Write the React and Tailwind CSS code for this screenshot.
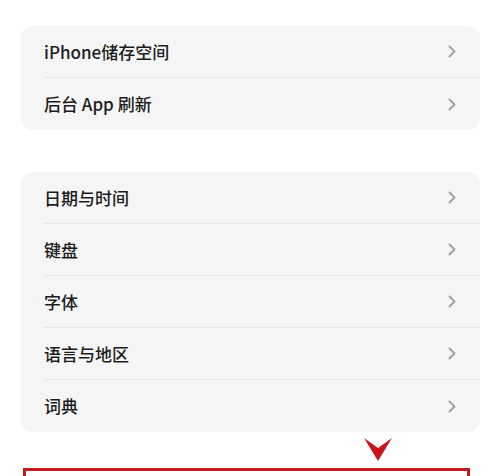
const groups = [
  ['iPhone储存空间', '后台 App 刷新'],
  ['日期与时间', '键盘', '字体', '语言与地区', '词典'],
];

function Chevron() {
  return (
    <svg width="8" height="13" viewBox="0 0 8 13" className="shrink-0">
      <path d="M1.5 1.5 L6.5 6.5 L1.5 11.5" fill="none" stroke="#a3a3a3" strokeWidth="2" strokeLinecap="round" strokeLinejoin="round" />
    </svg>
  );
}

function Row({ label, last }) {
  return (
    <div className="pl-[23px]">
      <div className={`flex h-[52px] items-center justify-between pr-[24px] ${last ? '' : 'border-b border-[#e6e6e6]'}`}>
        <span className="text-[17px] font-medium text-[#1c1c1c]">{label}</span>
        <Chevron />
      </div>
    </div>
  );
}

export default function App() {
  return (
    <div
      className="h-[476px] w-[500px] overflow-hidden bg-white"
      style={{ fontFamily: '"Noto Sans CJK SC", "Noto Sans", sans-serif' }}
    >
      <div className="flex flex-col gap-[42px] pl-[21px] pr-[20px] pt-[26px]">
        {groups.map((g, i) => (
          <div key={i} className="rounded-[12px] bg-[#f5f5f5]">
            {g.map((label, j) => (
              <Row key={label} label={label} last={j === g.length - 1} />
            ))}
          </div>
        ))}
      </div>
      <div className="flex justify-end pr-[108px] pt-[6px]">
        <svg width="28" height="23" viewBox="0 0 28 23">
          <path d="M0 0 L14 23 L28 0 L14 10 Z" fill="#c8141c" />
        </svg>
      </div>
      <div className="ml-[23px] mr-[30px] mt-[7px] h-[40px] border-[3px] border-[#c41a1f]" />
    </div>
  );
}
